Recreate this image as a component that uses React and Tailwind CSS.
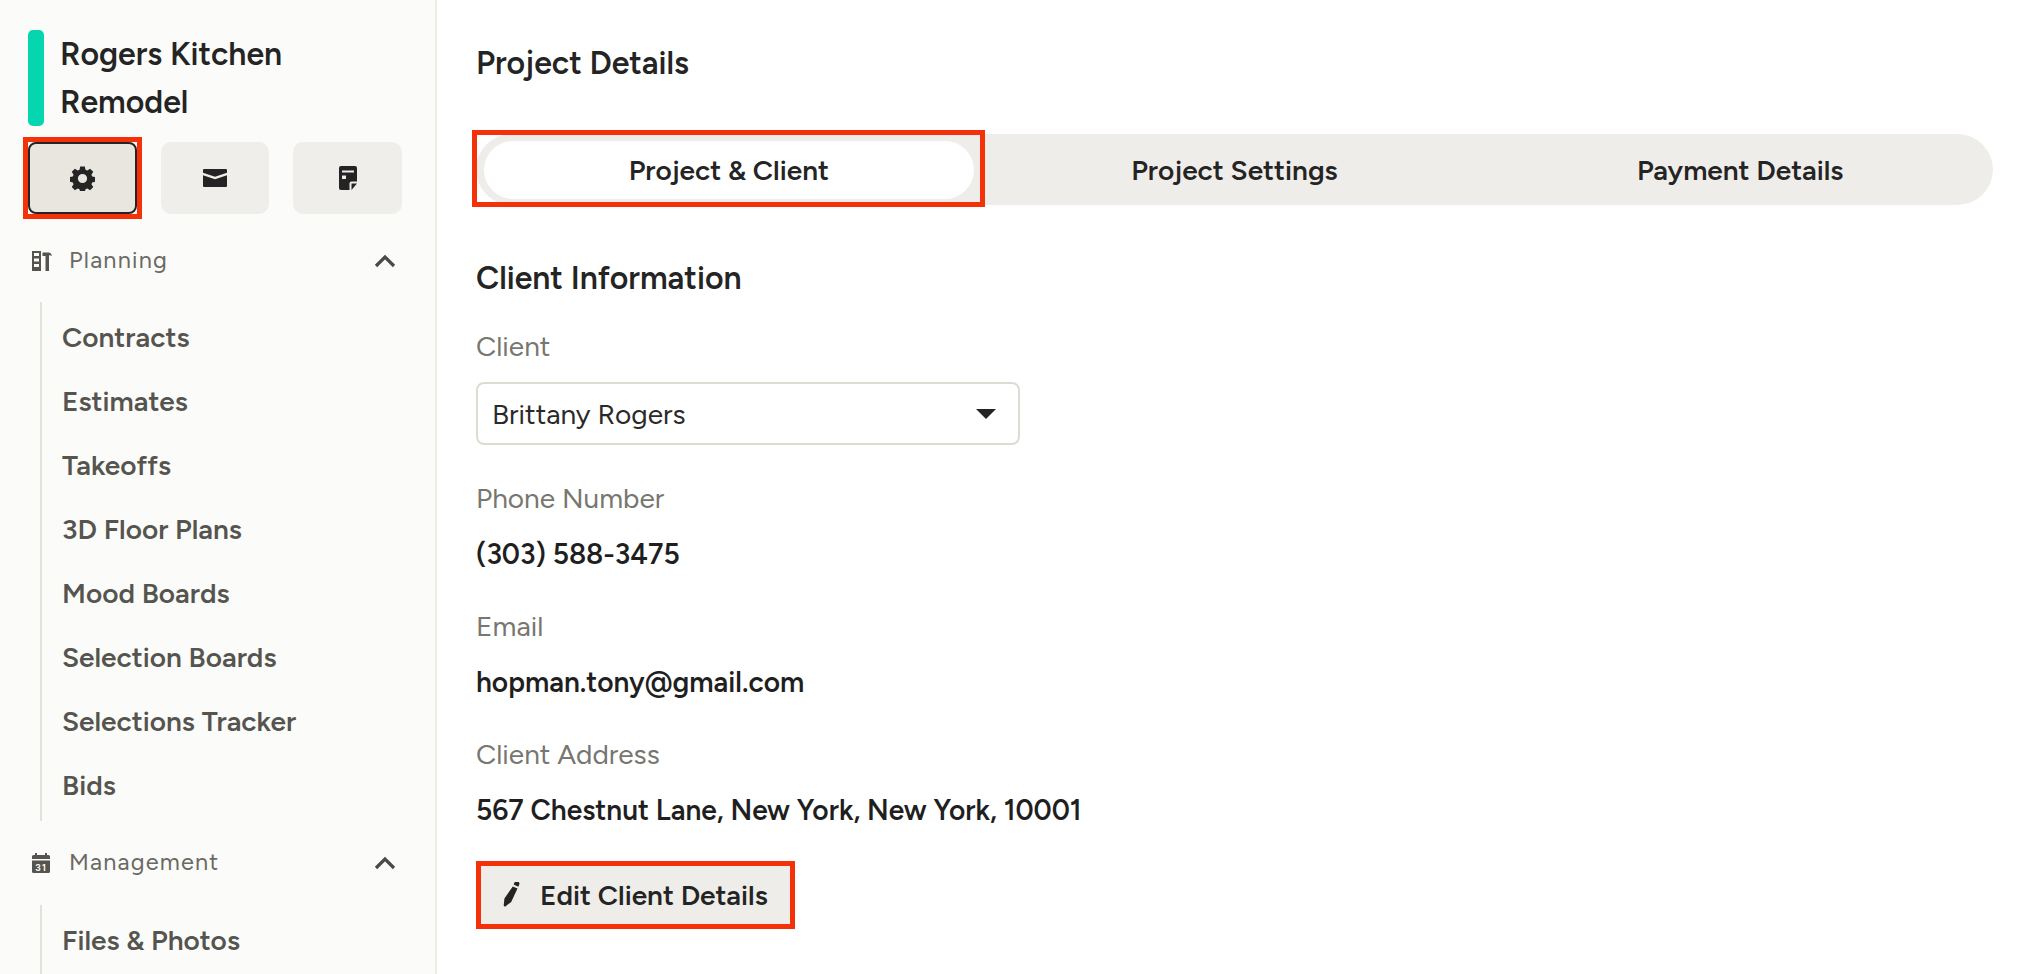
import React from "react";

const Gear = () => (
  <svg width="25" height="25" viewBox="0 0 26 26" fill="#242424">
    <path fillRule="evenodd" d="M10.600 0.500h4.800l.7 3.400 1.900.8 2.900-1.900 3.300 3.300-1.900 2.900.8 1.900 3.400.7v4.800l-3.400.7-.8 1.900 1.900 2.900-3.300 3.300-2.900-1.900-1.900.8-.7 3.400h-4.800l-.7-3.400-1.900-.8-2.900 1.900-3.300-3.300 1.900-2.900-.8-1.900-3.400-.7v-4.800l3.400-.7.8-1.900-1.900-2.900 3.300-3.300 2.900 1.900 1.900-.8zM13 8.200a4.800 4.800 0 1 0 0 9.600 4.800 4.800 0 0 0 0-9.600z" />
  </svg>
);
const Mail = () => (
  <svg width="24" height="18" viewBox="0 0 24 18" fill="#242424">
    <path d="M0 1a1 1 0 0 1 1-1h22a1 1 0 0 1 1 1v2.800L12 7.800 0 3.800z" />
    <path d="M0 6.200l12 4 12-4V17a1 1 0 0 1-1 1H1a1 1 0 0 1-1-1z" />
  </svg>
);
const Note = () => (
  <svg width="18" height="24" viewBox="0 0 18 24" fill="#242424">
    <path fillRule="evenodd" d="M2 0h14a2 2 0 0 1 2 2v13.500h-5.500a2 2 0 0 0-2 2V24H2a2 2 0 0 1-2-2V2a2 2 0 0 1 2-2zM3 4.500v2h12v-2zM3 9.500v3.500h4V9.500z" />
    <path d="M12.500 17.500H18L12.500 24z" />
  </svg>
);
const Tools = () => (
  <svg width="20" height="20" viewBox="0 0 20 20" fill="#55544f">
    <path fillRule="evenodd" d="M0 0h9v20H0zM2 2v3h5V2zM2 7.500v3h5v-3zM2 13v3h5v-3z" />
    <path d="M10.500 1.500h6c1.800 0 3 1.300 3.500 3.500-1.200-.7-2.200-.8-3-.4V20h-3.500V5h-3z" />
  </svg>
);
const Calendar = () => (
  <svg width="18" height="20" viewBox="0 0 18 20" fill="#55544f">
    <path d="M3 0h2v2h8V0h2v2h1.500A1.500 1.500 0 0 1 18 3.500V6H0V3.500A1.500 1.500 0 0 1 1.500 2H3z" />
    <path d="M0 7.500h18V18.500a1.500 1.500 0 0 1-1.500 1.500h-15A1.500 1.500 0 0 1 0 18.500z" />
    <text x="9" y="17.500" fontSize="8.500" fontWeight="700" fill="#fbfbf9" textAnchor="middle" fontFamily="Inter, sans-serif">31</text>
  </svg>
);
const Chevron = () => (
  <svg width="22" height="14" viewBox="0 0 22 14" fill="none" stroke="#4b4a46" strokeWidth="3.200">
    <path d="M2 12l9-9 9 9" />
  </svg>
);
const Pencil = () => (
  <svg width="17" height="25" viewBox="0 0 17 25" fill="#242424">
    <path d="M11.500.6a2.600 2.600 0 0 1 4.700 2.200l-.9 1.900-4.700-2.200zM9.800 4.400l4.700 2.200-6.300 13.300L2 24.800l-1.300-1 .7-7.300z" />
  </svg>
);

const planning = ["Contracts", "Estimates", "Takeoffs", "3D Floor Plans", "Mood Boards", "Selection Boards", "Selections Tracker", "Bids"];
const tabs = ["Project & Client", "Project Settings", "Payment Details"];

function NavHeader({ icon, label }) {
  return (
    <div className="flex h-[40px] items-center pl-[4px] pr-[39px] text-[23.500px] tracking-[1.200px] text-[#6a6963]">
      <span className="flex w-[37px] shrink-0">{icon}</span>
      <span className="flex-1 pb-[1px]">{label}</span>
      <Chevron />
    </div>
  );
}

function NavItem({ label }) {
  return <div className="flex h-[64px] items-center text-[28px] font-semibold text-[#55544f]">{label}</div>;
}

function Field({ label, value }) {
  return (
    <div className="flex flex-col">
      <div className="text-[28px] leading-[36px] text-[#77766f]">{label}</div>
      <div className="mt-[19.500px] text-[28.100px] font-semibold leading-[36px] text-[#1f1f1f]">{value}</div>
    </div>
  );
}

export default function App() {
  return (
    <div className="flex h-[974px] w-[2036px] overflow-hidden bg-white font-['Figtree','Inter','Liberation_Sans',sans-serif]">
      <aside className="flex w-[437px] shrink-0 flex-col overflow-hidden border-r-2 border-[#eeece7] bg-[#fbfbf9] pl-[28px] pt-[30px]">
        <div className="flex h-[96px]">
          <div className="h-[96px] w-[16px] rounded-[5px] bg-[#06d6b0]" />
          <div className="ml-[16px] text-[32px] font-semibold leading-[48px] text-[#242424]">Rogers Kitchen<br />Remodel</div>
        </div>
        <div className="mt-[16px] flex gap-[24px]">
          <div className="h-[72px] w-[109px] outline-[5px] outline-[#f5310a]">
            <button className="flex h-full w-full items-center justify-center rounded-[8px] border-2 border-[#242424] bg-[#e8e6df]"><Gear /></button>
          </div>
          <button className="flex h-[72px] w-[108px] items-center justify-center rounded-[10px] bg-[#f0eeea]"><Mail /></button>
          <button className="flex h-[72px] w-[109px] items-center justify-center rounded-[10px] bg-[#f0eeea]"><Note /></button>
        </div>
        <div className="mt-[27px]"><NavHeader icon={<Tools />} label="Planning" /></div>
        <div className="ml-[12px] mt-[21px] border-l-2 border-[#e3e1da] pb-[4px] pl-[20px] pt-[3px]">
          {planning.map((p) => <NavItem key={p} label={p} />)}
        </div>
        <div className="mt-[22px]"><NavHeader icon={<Calendar />} label="Management" /></div>
        <div className="ml-[12px] mt-[22px] flex-1 border-l-2 border-[#e3e1da] pl-[20px] pt-[3px]">
          <NavItem label="Files & Photos" />
        </div>
      </aside>
      <main className="flex-1 pl-[39px] pr-[43px] pt-[43px]">
        <h1 className="text-[32px] font-semibold leading-[40px] text-[#242424]">Project Details</h1>
        <div className="mt-[51px] grid h-[71px] grid-cols-3 items-center rounded-full bg-[#efede9]">
          {tabs.map((t, i) => (
            <div key={t} className={i === 0
              ? "relative mx-[8px] flex h-[58px] items-center justify-center rounded-full bg-white pt-[1px] text-[28px] font-semibold text-[#242424]"
              : "flex h-[58px] items-center justify-center pt-[1px] text-[28px] font-semibold text-[#242424]"}>
              {t}
              {i === 0 && <span className="absolute -bottom-[8px] -left-[12px] -right-[11px] -top-[11px] border-[5px] border-[#f5310a]" />}
            </div>
          ))}
        </div>
        <h2 className="mt-[53px] text-[32px] font-semibold leading-[40px] text-[#242424]">Client Information</h2>
        <div className="mt-[30px] text-[28px] leading-[36px] text-[#77766f]">Client</div>
        <div className="mt-[18px] flex h-[63px] w-[544px] items-center justify-between rounded-[8px] border-2 border-[#dedbd2] bg-white pl-[14px] pr-[22px] text-[28px] text-[#2a2a2a]">
          <span>Brittany Rogers</span>
          <span className="h-0 w-0 border-x-[10px] border-t-[10px] border-x-transparent border-t-[#242424]" />
        </div>
        <div className="mt-[35px]"><Field label="Phone Number" value="(303) 588-3475" /></div>
        <div className="mt-[36.500px]"><Field label="Email" value="hopman.tony@gmail.com" /></div>
        <div className="mt-[36.500px]"><Field label="Client Address" value="567 Chestnut Lane, New York, New York, 10001" /></div>
        <button className="mt-[33px] flex h-[68px] w-[319px] items-center border-[5px] border-[#f5310a] bg-[#efede9] pl-[22px] text-[28px] font-semibold text-[#242424]">
          <Pencil />
          <span className="ml-[20px]">Edit Client Details</span>
        </button>
      </main>
    </div>
  );
}
